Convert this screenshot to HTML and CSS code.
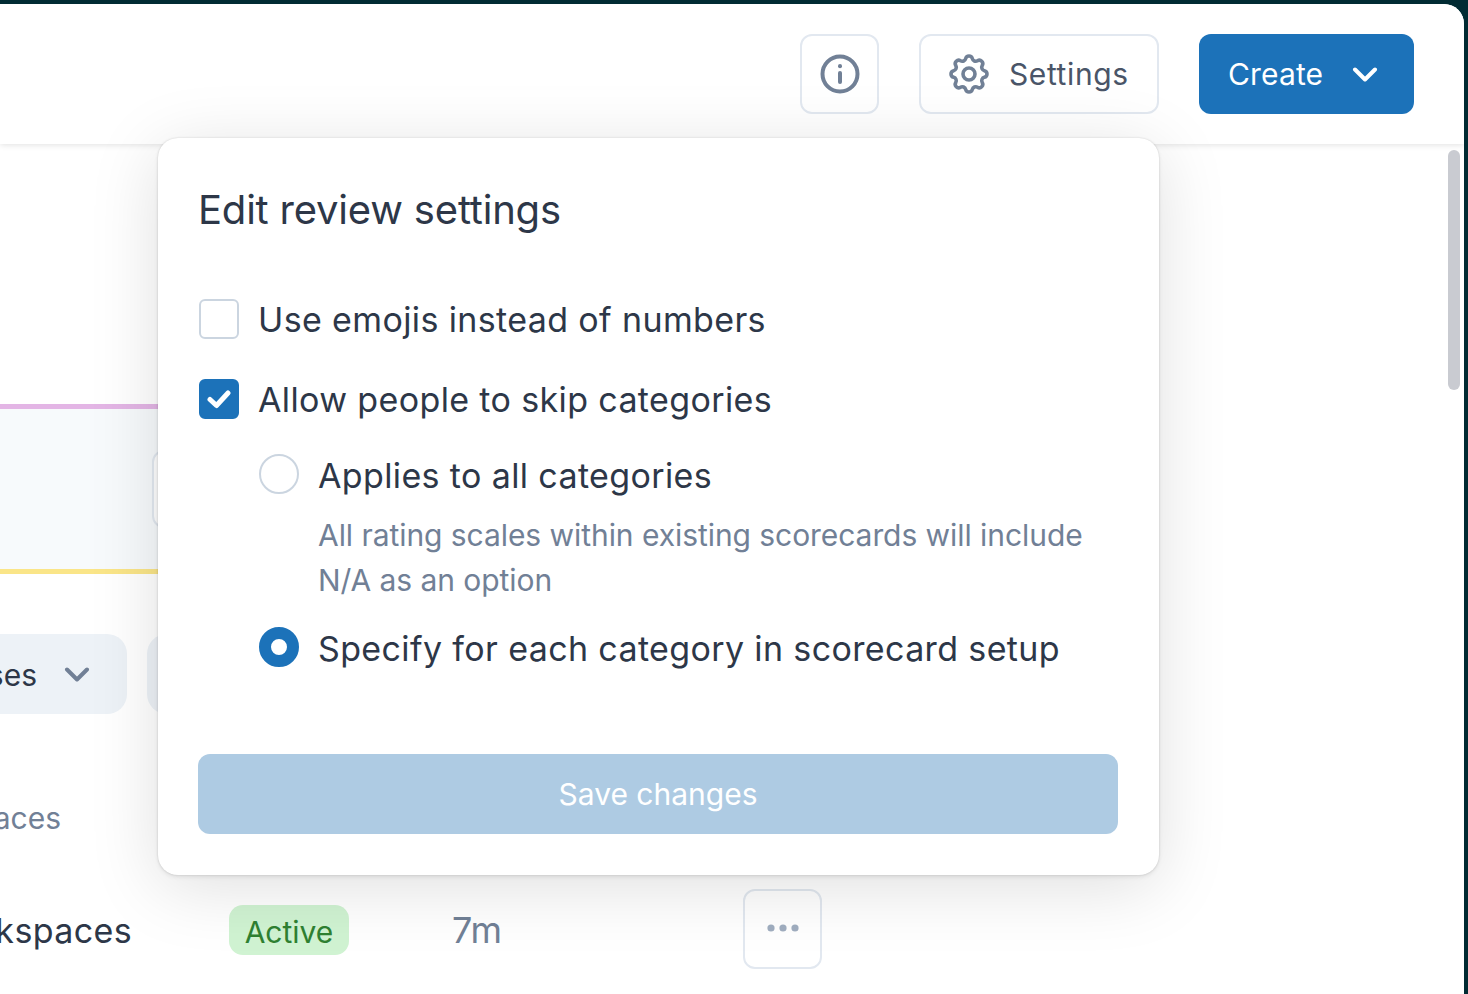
FILE: index.html
```html
<!DOCTYPE html>
<html lang="en">
<head>
<meta charset="utf-8">
<title>Edit review settings</title>
<link rel="stylesheet" href="styles.css">
</head>
<body>
<div class="window">
  <header class="topbar">
    <button class="btn btn-icon" aria-label="Info">
      <svg class="icon-40" viewBox="0 0 40 40" fill="none" stroke="#718096" stroke-width="4" stroke-linecap="round"><circle cx="20" cy="20" r="17.5"/><path d="M20 19v9"/><path d="M20 12v.2"/></svg>
    </button>
    <button class="btn btn-outline">
      <svg class="icon-gear" viewBox="0 0 24 24" fill="none" stroke="#718096" stroke-width="1.8" stroke-linecap="round" stroke-linejoin="round"><path d="M10.325 4.317c.426-1.756 2.924-1.756 3.35 0a1.724 1.724 0 002.573 1.066c1.543-.94 3.31.826 2.37 2.37a1.724 1.724 0 001.065 2.572c1.756.426 1.756 2.924 0 3.35a1.724 1.724 0 00-1.066 2.573c.94 1.543-.826 3.31-2.37 2.37a1.724 1.724 0 00-2.572 1.065c-.426 1.756-2.924 1.756-3.35 0a1.724 1.724 0 00-2.573-1.066c-1.543.94-3.31-.826-2.37-2.37a1.724 1.724 0 00-1.065-2.572c-1.756-.426-1.756-2.924 0-3.35a1.724 1.724 0 001.066-2.573c-.94-1.543.826-3.31 2.37-2.37.996.608 2.296.07 2.572-1.065z"/><circle cx="12" cy="12" r="3"/></svg>
      <span class="label-wide">Settings</span>
    </button>
    <button class="btn btn-primary">
      <span>Create</span>
      <svg class="chev-white" viewBox="0 0 26 16" fill="none" stroke="#fff" stroke-width="4" stroke-linecap="round" stroke-linejoin="round"><path d="M3 3.5l10 10 10-10"/></svg>
    </button>
  </header>

  <main class="content">
    <section class="banner">
      <div class="banner-btn"></div>
    </section>
    <div class="filters">
      <div class="pill"><span class="clip-right">All statuses</span>
        <svg class="chev-gray" viewBox="0 0 26 16" fill="none" stroke="#718096" stroke-width="4" stroke-linecap="round" stroke-linejoin="round"><path d="M3 3.5l10 10 10-10"/></svg>
      </div>
      <div class="pill pill-next"></div>
    </div>
    <div class="table-head"><span class="clip-right">Workspaces</span></div>
    <div class="table-row">
      <div class="cell-name"><span class="clip-right">All workspaces</span></div>
      <span class="badge">Active</span>
      <span class="time">7m</span>
      <button class="btn-more" aria-label="More">
        <svg class="dots" viewBox="0 0 32 8" fill="#a0aec0"><circle cx="4" cy="4" r="3.6"/><circle cx="16" cy="4" r="3.6"/><circle cx="28" cy="4" r="3.6"/></svg>
      </button>
    </div>

    <div class="scrollbar"></div>

    <aside class="popover">
      <h2 class="pop-title">Edit review settings</h2>
      <label class="option opt-first"><span class="check"></span><span class="opt-text">Use emojis instead of numbers</span></label>
      <label class="option opt-second"><span class="check check-on">
        <svg class="tick" viewBox="0 0 24 20" fill="none" stroke="#fff" stroke-width="5" stroke-linecap="round" stroke-linejoin="round"><path d="M3 10.5l6.5 6L21 4"/></svg>
      </span><span class="opt-text">Allow people to skip categories</span></label>
      <div class="sub">
        <label class="option opt-radio"><span class="radio"></span><span class="opt-text opt-text-low">Applies to all categories</span></label>
        <p class="hint">All rating scales within existing scorecards will include N/A as an option</p>
        <label class="option opt-radio2"><span class="radio radio-on"></span><span class="opt-text opt-text-low">Specify for each category in scorecard setup</span></label>
      </div>
      <button class="save">Save changes</button>
    </aside>
  </main>
</div>
</body>
</html>
```

FILE: styles.css
```css
* { box-sizing: border-box; }
html, body { margin: 0; height: 100%; overflow: hidden; }
body {
  background: #012b33;
  padding: 4px 4px 0 0;
  font-family: Inter, "Noto Sans", sans-serif;
  color: #2d3748;
}
.window {
  height: 990px;
  background: #fff;
  border-top-right-radius: 20px;
  display: flex;
  flex-direction: column;
  overflow: hidden;
}
.topbar {
  height: 140px;
  flex: none;
  display: flex;
  justify-content: flex-end;
  align-items: flex-start;
  gap: 40px;
  padding: 30px 50px 0 0;
  box-shadow: 0 1px 6px rgba(0, 0, 0, .12);
  position: relative;
  z-index: 1;
  background: #fff;
}
.btn {
  height: 80px;
  border-radius: 12px;
  display: flex;
  align-items: center;
  font: inherit;
  font-size: 30px;
  background: #fff;
  border: 2px solid #e2e8f0;
  color: #4a5568;
  padding: 0;
}
.btn-icon { width: 79px; justify-content: center; }
.btn-outline { width: 240px; padding-left: 24px; gap: 16px; }
.label-wide { letter-spacing: .6px; }
.btn-primary {
  width: 215px;
  padding-left: 29px;
  gap: 29px;
  background: #1c72b9;
  border: 0;
  color: #fff;
  letter-spacing: .15px;
}
.icon-40 { width: 40px; height: 40px; flex: none; }
.icon-gear { width: 48px; height: 48px; flex: none; }
.chev-white { width: 26px; height: 16px; flex: none; margin-top: -1px; }
.content { flex: 1; position: relative; padding-top: 260px; }
.banner {
  width: 1000px;
  height: 170px;
  background: #f7fafc;
  border-top: 5px solid #e3b5e5;
  border-bottom: 5px solid #fae588;
  padding: 41px 0 0 152px;
}
.banner-btn {
  width: 80px;
  height: 78px;
  border: 2px solid #e2e8f0;
  border-radius: 12px;
  background: #fff;
}
.filters { display: flex; gap: 20px; margin-top: 60px; }
.pill {
  width: 127px;
  height: 80px;
  background: #edf2f7;
  border-radius: 0 20px 20px 0;
  display: flex;
  align-items: center;
  justify-content: flex-end;
  padding-right: 37px;
  gap: 27px;
  font-size: 30px;
  overflow: hidden;
}
.pill-next { width: 200px; border-radius: 20px; }
.clip-right { white-space: nowrap; flex: none; padding-top: 2px; }
.chev-gray { width: 26px; height: 16px; flex: none; }
.table-head {
  width: 61px;
  margin-top: 85px;
  height: 36px;
  display: flex;
  justify-content: flex-end;
  align-items: center;
  overflow: hidden;
  font-size: 30px;
  color: #718096;
}
.table-row { display: flex; align-items: center; margin-top: 54px; height: 80px; }
.cell-name {
  width: 132px;
  display: flex;
  justify-content: flex-end;
  overflow: hidden;
  font-size: 34px;
  letter-spacing: .37px;
  flex: none;
}
.badge {
  margin-left: 97px;
  width: 120px;
  height: 50px;
  padding-top: 3px;
  background: #d0f3d2;
  border-radius: 14px;
  color: #2f8132;
  font-size: 30px;
  display: flex;
  align-items: center;
  justify-content: center;
  flex: none;
  margin-top: 2px;
}
.time { margin-left: 103px; width: 291px; font-size: 36px; color: #718096; flex: none; margin-top: 2px; }
.btn-more {
  width: 79px;
  height: 80px;
  background: #fff;
  border: 2px solid #e2e8f0;
  border-radius: 12px;
  display: flex;
  align-items: center;
  justify-content: center;
  padding: 0;
  flex: none;
}
.dots { width: 32px; height: 8px; margin-top: -2px; }
.scrollbar {
  position: absolute;
  left: 1448px;
  top: 6px;
  width: 12px;
  height: 240px;
  background: #c9cbd1;
  border-radius: 6px;
}
.popover {
  position: absolute;
  left: 158px;
  top: -6px;
  width: 1001px;
  height: 737px;
  z-index: 2;
  background: #fff;
  border-radius: 20px;
  padding: 48px 40px 0;
  box-shadow: 0 0 2px rgba(0, 0, 0, .16), 0 2px 4px rgba(0, 0, 0, .08), 0 12px 70px rgba(0, 0, 0, .13);
}
.pop-title { margin: 0; font-size: 40px; line-height: 48px; font-weight: 400; letter-spacing: -.2px; }
.option { display: flex; align-items: center; gap: 19px; font-size: 34px; height: 40px; }
.opt-text { letter-spacing: .37px; padding-top: 1px; }
.opt-text-low { padding-top: 2px; }
.opt-first { margin-top: 65px; }
.opt-second { margin-top: 40px; }
.check {
  width: 40px;
  height: 40px;
  margin-left: 1px;
  border: 2px solid #cbd5e0;
  border-radius: 6px;
  flex: none;
  display: flex;
  align-items: center;
  justify-content: center;
}
.check-on { background: #1c72b9; border-color: #1c72b9; }
.tick { width: 24px; height: 20px; }
.sub { padding-left: 60px; margin-top: 35px; }
.radio {
  width: 40px;
  height: 40px;
  margin-left: 1px;
  border: 2px solid #cbd5e0;
  border-radius: 50%;
  flex: none;
}
.radio-on { border: 12px solid #1c72b9; background: #fff; }
.hint {
  margin: 19px 0 0 60px;
  font-size: 30px;
  line-height: 45px;
  color: #718096;
  letter-spacing: -.06px;
}
.opt-radio2 { margin-top: 24px; }
.save {
  display: block;
  margin-top: 87px;
  width: 920px;
  height: 80px;
  background: #aecbe3;
  border: 0;
  border-radius: 12px;
  color: #fff;
  font: inherit;
  font-size: 30px;
}
```
